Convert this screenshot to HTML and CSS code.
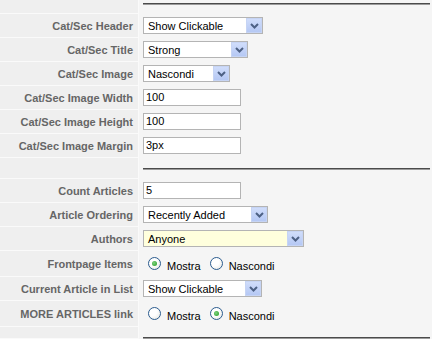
FILE: index.html
```html
<!DOCTYPE html>
<html lang="it">
<head>
    <meta charset="UTF-8">
    <title>Parametri</title>
    <link rel="stylesheet" href="styles.css">
</head>
<body>
<table class="paramlist">
    <tr class="sep-top">
        <td class="key"></td>
        <td class="val"><div class="rule"></div></td>
    </tr>
    <tr>
        <td class="key">Cat/Sec Header</td>
        <td class="val">
            <div class="select w-120"><span class="select-text">Show Clickable</span><span class="select-btn"><svg width="9" height="6" viewBox="0 0 9 6"><polyline points="1,1 4.5,4.5 8,1" fill="none" stroke="#4d6185" stroke-width="2"/></svg></span></div>
        </td>
    </tr>
    <tr>
        <td class="key">Cat/Sec Title</td>
        <td class="val">
            <div class="select w-105"><span class="select-text">Strong</span><span class="select-btn"><svg width="9" height="6" viewBox="0 0 9 6"><polyline points="1,1 4.5,4.5 8,1" fill="none" stroke="#4d6185" stroke-width="2"/></svg></span></div>
        </td>
    </tr>
    <tr>
        <td class="key">Cat/Sec Image</td>
        <td class="val">
            <div class="select w-87"><span class="select-text">Nascondi</span><span class="select-btn"><svg width="9" height="6" viewBox="0 0 9 6"><polyline points="1,1 4.5,4.5 8,1" fill="none" stroke="#4d6185" stroke-width="2"/></svg></span></div>
        </td>
    </tr>
    <tr>
        <td class="key">Cat/Sec Image Width</td>
        <td class="val"><div class="text-input">100</div></td>
    </tr>
    <tr>
        <td class="key">Cat/Sec Image Height</td>
        <td class="val"><div class="text-input">100</div></td>
    </tr>
    <tr>
        <td class="key">Cat/Sec Image Margin</td>
        <td class="val"><div class="text-input">3px</div></td>
    </tr>
    <tr class="sep">
        <td class="key"></td>
        <td class="val"><div class="rule"></div></td>
    </tr>
    <tr>
        <td class="key">Count Articles</td>
        <td class="val"><div class="text-input">5</div></td>
    </tr>
    <tr>
        <td class="key">Article Ordering</td>
        <td class="val">
            <div class="select w-125"><span class="select-text">Recently Added</span><span class="select-btn"><svg width="9" height="6" viewBox="0 0 9 6"><polyline points="1,1 4.5,4.5 8,1" fill="none" stroke="#4d6185" stroke-width="2"/></svg></span></div>
        </td>
    </tr>
    <tr>
        <td class="key">Authors</td>
        <td class="val">
            <div class="select w-161 highlight"><span class="select-text">Anyone</span><span class="select-btn"><svg width="9" height="6" viewBox="0 0 9 6"><polyline points="1,1 4.5,4.5 8,1" fill="none" stroke="#4d6185" stroke-width="2"/></svg></span></div>
        </td>
    </tr>
    <tr class="radio-row">
        <td class="key">Frontpage Items</td>
        <td class="val">
            <div class="radios">
                <span class="radio checked"></span><span class="radio-label">Mostra</span>
                <span class="radio"></span><span class="radio-label">Nascondi</span>
            </div>
        </td>
    </tr>
    <tr>
        <td class="key">Current Article in List</td>
        <td class="val">
            <div class="select w-119"><span class="select-text">Show Clickable</span><span class="select-btn"><svg width="9" height="6" viewBox="0 0 9 6"><polyline points="1,1 4.5,4.5 8,1" fill="none" stroke="#4d6185" stroke-width="2"/></svg></span></div>
        </td>
    </tr>
    <tr class="radio-row">
        <td class="key">MORE ARTICLES link</td>
        <td class="val">
            <div class="radios">
                <span class="radio"></span><span class="radio-label">Mostra</span>
                <span class="radio checked"></span><span class="radio-label">Nascondi</span>
            </div>
        </td>
    </tr>
    <tr class="sep sep-bottom">
        <td class="key"></td>
        <td class="val"><div class="rule"></div></td>
    </tr>
</table>
</body>
</html>
```

FILE: styles.css
```css
body {
    margin: 0;
    background-color: #f5f5f5;
    font-family: "Liberation Sans", Arial, sans-serif;
    font-size: 11px;
}

.paramlist {
    width: 432px;
    table-layout: fixed;
    border-collapse: separate;
    border-spacing: 0;
}

.key {
    box-sizing: border-box;
    width: 139px;
    padding: 1px 5px 0 0;
    text-align: right;
    font-weight: bold;
    color: #666;
    background-color: #efefef;
    border-bottom: 1px solid #fafafa;
    border-right: 1px solid #fafafa;
    white-space: nowrap;
}

.val {
    height: 17px;
    padding: 3px 2px 4px 4px;
    vertical-align: middle;
}

.sep-top .val {
    height: 2px;
    padding: 3px 2px 9px 4px;
}

.sep .val {
    height: 2px;
    padding: 10px 2px 9px 4px;
}

.sep-bottom .val {
    padding: 10px 2px 0 4px;
}

.rule {
    height: 0;
    border-top: 1px solid #4b4b4b;
    border-bottom: 1px solid #9b9b9b;
}

.radio-row .val {
    height: 19px;
}

/* select boxes */
.select {
    box-sizing: border-box;
    display: flex;
    align-items: center;
    height: 17px;
    background-color: #fff;
    border: 1px solid #b4b4b4;
    color: #000;
}

.select.highlight {
    background-color: #ffffdd;
}

.select-text {
    flex: 1;
    padding-left: 4px;
    padding-top: 1px;
    line-height: 14px;
    white-space: nowrap;
    overflow: hidden;
}

.select-btn {
    box-sizing: border-box;
    display: flex;
    align-items: center;
    justify-content: center;
    width: 16px;
    height: 15px;
    background: linear-gradient(#d0ddfb, #b5c8f4);
    border: 1px solid #c6d4f4;
}

.w-87 { width: 87px; }
.w-105 { width: 105px; }
.w-119 { width: 119px; }
.w-120 { width: 120px; }
.w-125 { width: 125px; }
.w-161 { width: 161px; }

/* text inputs */
.text-input {
    box-sizing: border-box;
    width: 98px;
    height: 17px;
    padding-left: 2px;
    line-height: 15px;
    background-color: #fff;
    border: 1px solid #b4b4b4;
    color: #000;
}

/* radios */
.radios {
    display: flex;
    align-items: center;
    height: 19px;
}

.radio {
    box-sizing: border-box;
    position: relative;
    width: 13px;
    height: 13px;
    margin-left: 5px;
    border: 1px solid #2a5b8e;
    border-radius: 50%;
    background: radial-gradient(circle at 35% 35%, #ffffff 40%, #e2e2dc 100%);
}

.radio + .radio-label + .radio {
    margin-left: 9px;
}

.radio.checked::after {
    content: "";
    position: absolute;
    left: 3px;
    top: 3px;
    width: 5px;
    height: 5px;
    border-radius: 50%;
    background: radial-gradient(circle at 40% 40%, #7fd27f, #1f9a1f);
}

.radio-label {
    margin-left: 6px;
    padding-top: 5px;
    color: #000;
    font-size: 11px;
}
```
